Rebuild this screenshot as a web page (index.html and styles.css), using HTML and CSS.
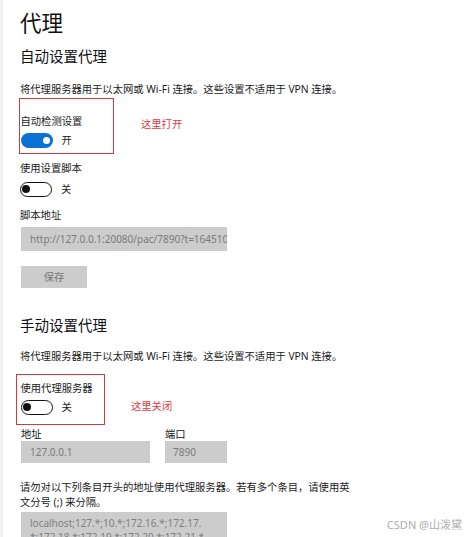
FILE: index.html
```html
<!DOCTYPE html>
<html lang="zh-CN">
<head>
<meta charset="utf-8">
<title>代理</title>
<link rel="stylesheet" href="styles.css">
</head>
<body>
<div class="page">
  <h1 class="title">代理</h1>

  <h2 class="heading">自动设置代理</h2>
  <p class="desc">将代理服务器用于以太网或 Wi-Fi 连接。这些设置不适用于 VPN 连接。</p>

  <div class="mark-row">
    <div class="mark mark-auto">
      <div class="label">自动检测设置</div>
      <div class="toggle-row toggle-row-in">
        <span class="toggle toggle-on"><span class="knob"></span></span>
        <span class="sw-text">开</span>
      </div>
    </div>
    <div class="note note-on">这里打开</div>
  </div>

  <div class="label label-script">使用设置脚本</div>
  <div class="toggle-row toggle-row-script">
    <span class="toggle toggle-off"><span class="knob"></span></span>
    <span class="sw-text">关</span>
  </div>

  <div class="label label-addr">脚本地址</div>
  <div class="field field-script">http://127.0.0.1:20080/pac/7890?t=1645100000000</div>
  <div class="btn">保存</div>

  <h2 class="heading heading-manual">手动设置代理</h2>
  <p class="desc desc-manual">将代理服务器用于以太网或 Wi-Fi 连接。这些设置不适用于 VPN 连接。</p>

  <div class="mark-row mark-row-manual">
    <div class="mark mark-manual">
      <div class="label">使用代理服务器</div>
      <div class="toggle-row toggle-row-in2">
        <span class="toggle toggle-off"><span class="knob"></span></span>
        <span class="sw-text">关</span>
      </div>
    </div>
    <div class="note note-off">这里关闭</div>
  </div>

  <div class="addr-row">
    <div class="col">
      <div class="col-label">地址</div>
      <div class="field field-small field-host">127.0.0.1</div>
    </div>
    <div class="col">
      <div class="col-label">端口</div>
      <div class="field field-small field-port">7890</div>
    </div>
  </div>

  <p class="help">请勿对以下列条目开头的地址使用代理服务器。若有多个条目，请使用英文分号 (;) 来分隔。</p>

  <div class="area">
    <span class="area-line">localhost;127.*;10.*;172.16.*;172.17.</span>
    <span class="area-line">*;172.18.*;172.19.*;172.20.*;172.21.*</span>
  </div>
</div>
<div class="watermark">CSDN @山泼黛</div>
</body>
</html>
```
FILE: styles.css
```css
* { box-sizing: border-box; }

html, body {
  margin: 0;
  height: 537px;
  overflow: hidden;
}

body {
  position: relative;
  background: #ffffff;
  border-left: 3px solid #f1f1f1;
  font-family: "Noto Sans", "Noto Sans CJK SC", sans-serif;
  color: #1a1a1a;
}

.page {
  padding: 8px 0 0 17px;
}

.title {
  margin: 0;
  font-size: 21.5px;
  line-height: 30px;
  font-weight: 400;
  color: #111;
}

.heading {
  margin: 8px 0 0;
  font-size: 14.5px;
  line-height: 20px;
  font-weight: 400;
  color: #111;
}

.heading-manual { margin-top: 27px; }

.desc {
  margin: 15px 0 0;
  font-size: 10.3px;
  line-height: 16px;
  color: #1a1a1a;
}

.desc-manual { margin-top: 12.5px; }

.mark-row {
  display: flex;
  align-items: flex-start;
  margin-top: 1px;
}

.mark-row-manual { margin-top: 10.5px; }

.mark {
  border: 1.5px solid #d9363e;
}

.mark-auto {
  width: 95px;
  margin-left: -1px;
  padding: 13.5px 0 5px 0.5px;
}

.mark-manual {
  width: 89px;
  margin-left: -4px;
  padding: 4.5px 0 9.5px 3.5px;
}

.note {
  color: #e23a44;
  font-size: 10.3px;
  line-height: 16px;
}

.note-on { margin: 18px 0 0 27px; }
.note-off { margin: 24px 0 0 26px; }

.label {
  font-size: 10.3px;
  line-height: 16px;
}

.label-script { margin-top: 6px; }
.label-addr { margin-top: 10.5px; }

.toggle-row {
  display: flex;
  align-items: center;
  gap: 9px;
  height: 15px;
}

.toggle-row-in { margin-top: 4.5px; }
.toggle-row-script { margin-top: 5.5px; }
.toggle-row-in2 { margin-top: 4px; }

.toggle {
  display: flex;
  align-items: center;
  width: 32px;
  height: 15px;
  border-radius: 8px;
}

.toggle-on {
  background: #0a72d6;
  justify-content: flex-end;
  padding-right: 3px;
}

.toggle-on .knob {
  width: 7px;
  height: 7px;
  border-radius: 50%;
  background: #ffffff;
}

.toggle-off {
  border: 1.5px solid #111;
  justify-content: flex-start;
  padding-left: 1px;
}

.toggle-off .knob {
  width: 8px;
  height: 8px;
  border-radius: 50%;
  background: #111;
}

.sw-text {
  font-size: 10.3px;
  line-height: 15px;
}

.field {
  background: #cccccc;
  color: #7a7a7a;
  font-size: 10px;
  height: 24px;
  line-height: 24px;
  padding-left: 9px;
  white-space: nowrap;
  overflow: hidden;
}

.field-script {
  width: 206px;
  margin: 4px 0 0 1px;
}

.btn {
  width: 66px;
  height: 22px;
  margin: 15px 0 0 1px;
  background: #cccccc;
  color: #777;
  font-size: 10.3px;
  line-height: 22px;
  text-align: center;
}

.addr-row {
  display: flex;
  gap: 15px;
  margin: 2.5px 0 0 1px;
}

.col-label {
  font-size: 10.3px;
  line-height: 13.5px;
  color: #111;
}

.field-small {
  height: 22px;
  line-height: 22px;
}

.field-host { width: 129px; }
.field-port { width: 62px; padding-left: 8px; }

.help {
  margin: 17px 0 0;
  width: 334px;
  font-size: 10.3px;
  line-height: 15px;
  color: #1a1a1a;
}

.area {
  width: 206px;
  height: 40px;
  margin: 2px 0 0 1px;
  padding: 4px 9px 0;
  background: #cccccc;
  color: #808080;
  font-size: 10px;
  line-height: 14px;
  overflow: hidden;
}

.area-line {
  display: block;
  white-space: nowrap;
}

.watermark {
  position: absolute;
  right: 12px;
  bottom: 5px;
  font-size: 11px;
  line-height: 14px;
  color: #adadad;
}
```
